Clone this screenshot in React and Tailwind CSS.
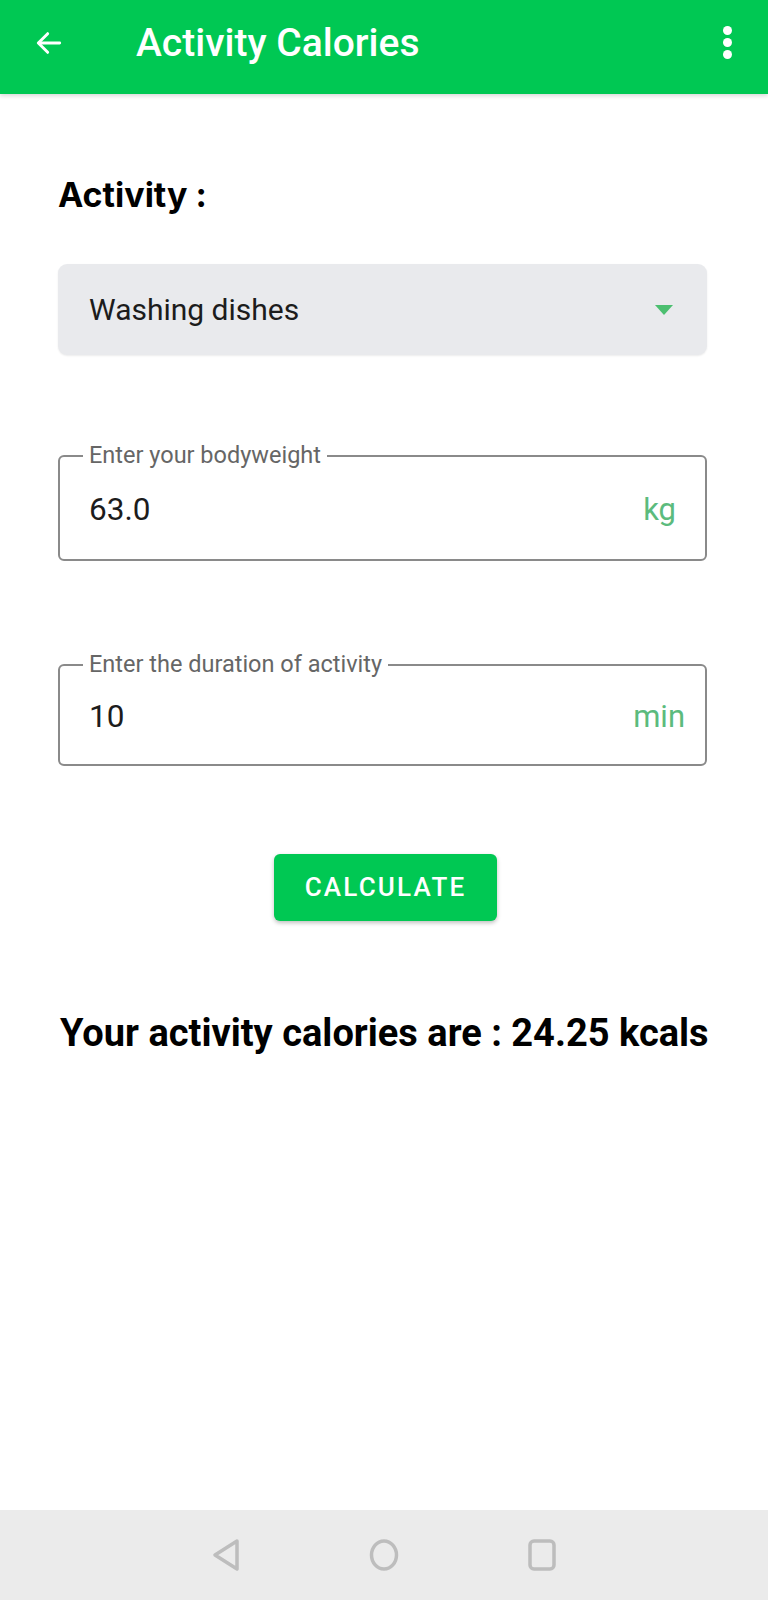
import React from 'react';

function Field({ label, value, unit, padRight, height }) {
    return (
        <div className={`relative border-2 border-[#8a8a8a] rounded-[6px] flex items-center justify-between pl-[29px] ${padRight} ${height}`}>
            <span className="absolute left-[23px] top-[-15px] bg-white px-[6px] text-[23.5px] leading-[26px] text-[#666666]">{label}</span>
            <span className="text-[31.5px] text-[#1c1c1c] mt-[4px]">{value}</span>
            <span className="text-[31px] text-[#5cbb7d] mt-[4px]">{unit}</span>
        </div>
    );
}

export default function App() {
    return (
        <div className="w-[768px] h-[1600px] bg-white flex flex-col font-['Roboto',sans-serif]">
            <header className="h-[94px] bg-[#00c853] flex items-center pb-[9px] shrink-0 shadow-[0_2px_4px_rgba(0,0,0,0.15)]">
                <svg width="32" height="32" viewBox="0 0 24 24" className="ml-[33px]" fill="none" stroke="white" strokeWidth="2.2" strokeLinecap="round" strokeLinejoin="round">
                    <path d="M20 12H4.5" />
                    <path d="M11 5l-7 7 7 7" />
                </svg>
                <h1 className="ml-[71px] text-white text-[39px] font-medium leading-[44px]">Activity Calories</h1>
                <div className="ml-auto mr-[36px] flex flex-col gap-[3px]">
                    <span className="w-[9px] h-[9px] rounded-full bg-white" />
                    <span className="w-[9px] h-[9px] rounded-full bg-white" />
                    <span className="w-[9px] h-[9px] rounded-full bg-white" />
                </div>
            </header>

            <main className="flex-1 pl-[58px] pr-[61px] flex flex-col">
                <h2 className="mt-[81px] text-[34px] font-bold text-black leading-[40px] font-['Inter',sans-serif]">Activity :</h2>

                <div className="mt-[49px] h-[91px] bg-[#e9eaed] rounded-[9px] flex items-center justify-between pl-[31px] pr-[34px] shadow-[0_1px_2px_rgba(0,0,0,0.08)]">
                    <span className="text-[30px] text-[#1c1c1c]">Washing dishes</span>
                    <svg width="18" height="10" viewBox="0 0 18 10">
                        <polygon points="0,0 18,0 9,10" fill="#4cbf70" />
                    </svg>
                </div>

                <div className="mt-[100px]">
                    <Field label="Enter your bodyweight" value="63.0" unit="kg" padRight="pr-[29px]" height="h-[106px]" />
                </div>
                <div className="mt-[103px]">
                    <Field label="Enter the duration of activity" value="10" unit="min" padRight="pr-[20px]" height="h-[102px]" />
                </div>

                <div className="mt-[88px] flex justify-center pl-[6px]">
                    <button className="w-[223px] h-[67px] bg-[#00c853] rounded-[6px] text-white text-[26px] font-medium tracking-[2.2px] shadow-[0_2px_4px_rgba(0,0,0,0.25)]">
                        CALCULATE
                    </button>
                </div>

                <p className="mt-[90px] text-center text-[38px] font-bold text-black leading-[44px] pl-[2px] whitespace-nowrap">
                    Your activity calories are : 24.25 kcals
                </p>
            </main>

            <nav className="h-[90px] bg-[#ebebeb] flex items-center justify-center gap-[128px] shrink-0">
                <svg width="30" height="34" viewBox="0 0 30 34" fill="none" stroke="#bdbdbd" strokeWidth="3.5" strokeLinejoin="round">
                    <path d="M26 3 L4 17 L26 31 Z" />
                </svg>
                <svg width="30" height="34" viewBox="0 0 30 34" fill="none" stroke="#bdbdbd" strokeWidth="3.5">
                    <ellipse cx="15" cy="17" rx="12.5" ry="14" />
                </svg>
                <svg width="30" height="34" viewBox="0 0 30 34" fill="none" stroke="#bdbdbd" strokeWidth="3.5">
                    <rect x="3" y="3" width="24" height="28" rx="4" />
                </svg>
            </nav>
        </div>
    );
}
